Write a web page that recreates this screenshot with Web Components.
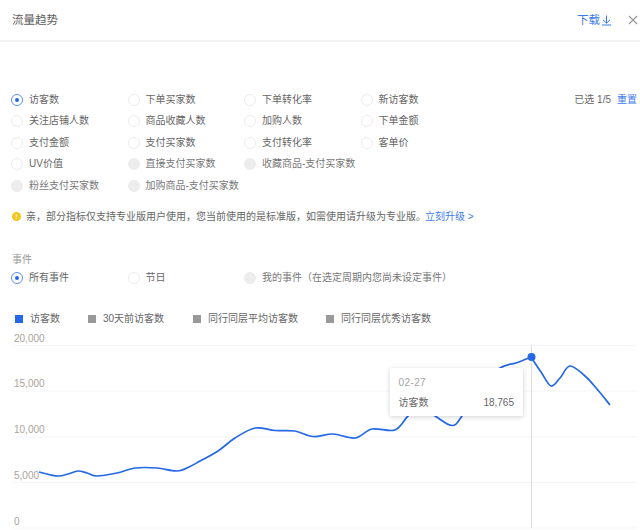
<!DOCTYPE html>
<html lang="zh-CN"><head><meta charset="utf-8"><title>流量趋势</title>
<style>
html,body{margin:0;background:#fff;width:640px;height:530px;overflow:hidden}
body{font:10px/14px "Liberation Sans","Noto Sans CJK SC",sans-serif;color:#666}
</style></head><body>
<trend-panel>
  <panel-header title-text="流量趋势"></panel-header>
  <radio-grid style="--top:47px">
    <span slot="aside">已选 1/5<a>重置</a></span>
    <flow-radio checked>访客数</flow-radio><flow-radio>下单买家数</flow-radio><flow-radio>下单转化率</flow-radio><flow-radio>新访客数</flow-radio>
    <flow-radio>关注店铺人数</flow-radio><flow-radio>商品收藏人数</flow-radio><flow-radio>加购人数</flow-radio><flow-radio>下单金额</flow-radio>
    <flow-radio>支付金额</flow-radio><flow-radio>支付买家数</flow-radio><flow-radio>支付转化率</flow-radio><flow-radio>客单价</flow-radio>
    <flow-radio>UV价值</flow-radio><flow-radio disabled>直接支付买家数</flow-radio><flow-radio disabled>收藏商品-支付买家数</flow-radio><span></span>
    <flow-radio disabled>粉丝支付买家数</flow-radio><flow-radio disabled>加购商品-支付买家数</flow-radio>
  </radio-grid>
  <upgrade-notice></upgrade-notice>
  <event-filter></event-filter>
  <chart-legend></chart-legend>
  <trend-chart></trend-chart>
</trend-panel>
<script>
const def=(n,html,init)=>customElements.define(n,class extends HTMLElement{constructor(){super();this.attachShadow({mode:'open'}).innerHTML=typeof html==='function'?html(this):html;}connectedCallback(){init&&init(this)}});
const BLUE='#2468e6';
def('trend-panel',`<style>:host{display:block;width:640px;height:530px;overflow:hidden}</style><slot></slot>`);
def('panel-header',`<style>
:host{display:flex;align-items:center;height:40px;padding:0 2px 0 12px;border-bottom:2px solid #f3f3f3;font-size:11.5px;color:#5c5c5c}
.t{flex:1;font-size:11.5px}
a{display:flex;align-items:center;color:#3d7bec;font-size:11.5px;margin-right:16px}
svg{display:block}
</style><span class="t">流量趋势</span><a>下载<svg width="12" height="12" viewBox="0 0 12 12"><path d="M6.5 1.5v7.5M3 5.8l3.5 3.4L10 5.8M2 11h9" fill="none" stroke="#3d7bec" stroke-width="1"/></svg></a><svg width="10" height="10" viewBox="0 0 10 10"><path d="M1 1l8 8M9 1l-8 8" stroke="#999" stroke-width="1.2" fill="none"/></svg>`);
def('flow-radio',h=>`<style>
:host{display:flex;align-items:center;gap:6px;white-space:nowrap;color:#666;font-size:10px}
i{flex:none;box-sizing:border-box;width:12px;height:12px;border-radius:50%;border:1px solid #ececec;background:#fff;display:grid;place-items:center}
:host([disabled]) i{background:#ededed}
:host([disabled]){color:#777}
:host([checked]) i{border-color:#5a8ff0}
:host([checked]) i::after{content:"";width:4px;height:4px;border-radius:50%;background:${BLUE}}
</style><i></i><slot></slot>`);
def('radio-grid',`<style>
:host{display:grid;position:relative;margin:var(--top,0) 0 0 11px;grid-template-columns:repeat(4,116.5px);grid-auto-rows:21.5px}
.aside{position:absolute;right:3px;top:4px;font-size:10px;color:#666}
::slotted(span[slot=aside]){display:block}
</style><div class="aside"><slot name="aside"></slot></div><slot></slot>`);
document.querySelector('span[slot=aside] a').style.cssText='color:#3d7bec;margin-left:6px';
def('upgrade-notice',`<style>
:host{display:flex;align-items:center;gap:5px;height:14px;margin:13px 0 0 12px;font-size:10px;color:#666;white-space:nowrap}
i{flex:none;width:9px;height:9px;border-radius:50%;background:#f5c518;color:#fff;display:grid;place-items:center;font:bold 7px/9px "Liberation Sans",sans-serif}
a{color:#3d7bec;margin-left:-1px}
</style><i>!</i><span>亲，部分指标仅支持专业版用户使用，您当前使用的是标准版，如需使用请升级为专业版。<a>立刻升级 &gt;</a></span>`);
def('event-filter',`<style>
:host{display:block;margin:29px 0 0 11px}
.l{height:14px;color:#999;font-size:10px;padding-left:1px}
.r{display:grid;grid-template-columns:repeat(3,116.5px);height:23px}
</style><div class="l">事件</div><div class="r"><flow-radio checked>所有事件</flow-radio><flow-radio>节日</flow-radio><flow-radio disabled>我的事件（在选定周期内您尚未设定事件）</flow-radio></div>`);
def('chart-legend',`<style>
:host{display:flex;height:14px;margin:22px 0 0 15px;font-size:10px;color:#666;white-space:nowrap}
span{display:flex;align-items:center;gap:7px}
i{width:8px;height:8px;background:#999}
.a i{background:${BLUE}}
.a{width:73px}.b{width:105px}.c{width:133px}
</style><span class="a"><i></i>访客数</span><span class="b"><i></i>30天前访客数</span><span class="c"><i></i>同行同层平均访客数</span><span><i></i>同行同层优秀访客数</span>`);
def('trend-chart',`<style>
:host{display:block;position:relative;height:200px;margin-top:4.5px}
svg{display:block;position:absolute;left:0;top:0}
text{font:10px "Liberation Sans",sans-serif;fill:#aaa39b}
.tip{position:absolute;left:390px;top:38px;width:133px;height:48px;box-sizing:border-box;padding:8px 9px 0 8.5px;background:#fff;box-shadow:0 1px 5px rgba(0,0,0,.18);font-size:10px;color:#666}
.d{color:#a3a3a3;font-size:10px;letter-spacing:.4px;line-height:14px}
.v{display:flex;justify-content:space-between;margin-top:6px;line-height:14px}
</style><svg id="s" width="640" height="200" viewBox="0 330 640 200"></svg><div class="tip"><div class="d">02-27</div><div class="v"><span>访客数</span><span>18,765</span></div></div>`,h=>{
 const A=[[39,472],[49,474.5],[59,476],[68,474],[78,471],[87,473],[97,476],[117,473],[135,468],[157,468],[177,471],[190,466.5],[200,461],[218,451],[235,438],[255,428],[275,430.5],[295,431],[313,436.5],[333,434],[355,438],[372,429],[395,430],[408,416],[420,407],[435,416],[452,425.5],[462,416],[480,388],[500,368],[516,363],[531,357]];
 const B=[[531,357],[541,372],[551,386],[560,378],[570,366],[585,376],[597,389],[610,405]];
 const seg=P=>{let d='M'+P[0];
 for(let i=0;i<P.length-1;i++){const a=P[i-1]||P[i],b=P[i],c=P[i+1],e=P[i+2]||c;
  d+='C'+[b[0]+(c[0]-a[0])/6,b[1]+(c[1]-a[1])/6,c[0]-(e[0]-b[0])/6,c[1]-(e[1]-b[1])/6,c[0],c[1]].map(n=>n.toFixed(1)).join(' ');}
 return d;};
 const d=seg(A)+seg(B);
 const ys=[[345.5,'20,000',-4],[391,'15,000',-4],[437,'10,000',-4],[482.5,'5,000',-4],[528,'0',-3]];
 h.shadowRoot.getElementById('s').innerHTML=ys.map(([y,t,o])=>`<path d="M12 ${y}H637" stroke="#f4f5fa" stroke-width="1"/><text x="14" y="${y+o}">${t}</text>`).join('')
 +`<path d="M531.5 345V528" stroke="#dedede"/><path d="${d}" fill="none" stroke="${BLUE}" stroke-width="1.7" stroke-linejoin="round"/><circle cx="531.5" cy="357" r="4" fill="${BLUE}"/>`;
});
</script>
</body></html>
